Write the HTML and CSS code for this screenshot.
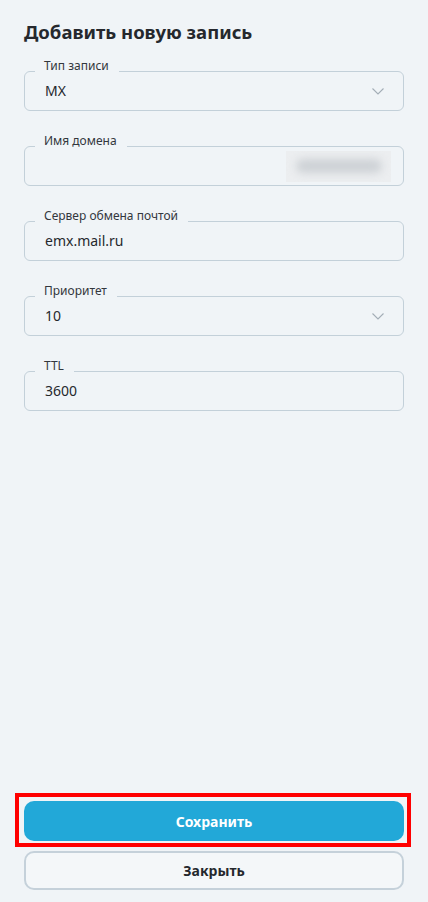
FILE: index.html
```html
<!DOCTYPE html>
<html lang="ru">
<head>
<meta charset="utf-8">
<title>Добавить новую запись</title>
<link rel="stylesheet" href="styles.css">
</head>
<body>
<div class="page">
  <h1 class="title">Добавить новую запись</h1>
  <form class="form">
    <div class="field">
      <span class="field-label">Тип записи</span>
      <span class="field-value">MX</span>
      <svg class="chevron" width="12" height="7" viewBox="0 0 12 7"><path d="M0.5 0.5 L6 6 L11.5 0.5" fill="none" stroke="#a3adb6" stroke-width="1.1"/></svg>
    </div>
    <div class="field">
      <span class="field-label">Имя домена</span>
      <span class="blurred"><span class="blob"></span></span>
    </div>
    <div class="field">
      <span class="field-label">Сервер обмена почтой</span>
      <span class="field-value">emx.mail.ru</span>
    </div>
    <div class="field">
      <span class="field-label">Приоритет</span>
      <span class="field-value">10</span>
      <svg class="chevron" width="12" height="7" viewBox="0 0 12 7"><path d="M0.5 0.5 L6 6 L11.5 0.5" fill="none" stroke="#a3adb6" stroke-width="1.1"/></svg>
    </div>
    <div class="field">
      <span class="field-label">TTL</span>
      <span class="field-value">3600</span>
    </div>
  </form>
  <div class="actions">
    <button type="button" class="btn btn-primary highlighted">Сохранить</button>
    <button type="button" class="btn btn-secondary">Закрыть</button>
  </div>
</div>
</body>
</html>
```
FILE: styles.css
```css
* { box-sizing: border-box; }
html, body { margin: 0; padding: 0; }
body {
  background: #f0f4f7;
  font-family: "Noto Sans", "Open Sans", sans-serif;
  color: #25282d;
}
.page {
  min-height: 902px;
  display: flex;
  flex-direction: column;
  padding: 20px 24px 12px;
}
.title {
  margin: 0;
  font-size: 18.5px;
  line-height: 24px;
  font-weight: 700;
  color: #25282d;
}
.form {
  margin-top: 27px;
  display: flex;
  flex-direction: column;
  gap: 35px;
}
.field {
  position: relative;
  height: 40px;
  border: 1px solid #c3d0d9;
  border-radius: 6px;
  display: flex;
  align-items: center;
  padding: 0 19px 0 20px;
}
.field-label {
  position: absolute;
  left: 10px;
  top: -13px;
  padding: 0 10px 0 9px;
  background: #f0f4f7;
  font-size: 12px;
  line-height: 14px;
  color: #33373d;
}
.field-value {
  font-size: 14px;
  line-height: 20px;
  color: #25282d;
}
.chevron {
  margin-left: auto;
  display: block;
}
.blurred {
  margin-left: auto;
  margin-right: -7px;
  width: 105px;
  height: 31px;
  background: #eceef0;
  display: flex;
  align-items: center;
  justify-content: center;
  overflow: hidden;
}
.blob {
  display: block;
  width: 86px;
  height: 14px;
  border-radius: 7px;
  background: #cdd1d5;
  filter: blur(4px);
}
.actions {
  margin-top: auto;
  display: flex;
  flex-direction: column;
  gap: 10px;
}
.btn {
  width: 100%;
  height: 40px;
  border-radius: 10px;
  font-family: "Noto Sans", "Open Sans", sans-serif;
  font-size: 14px;
  font-weight: 700;
  cursor: pointer;
}
.btn-primary {
  background: #22a8d8;
  color: #ffffff;
  border: none;
}
.btn-secondary {
  height: 39px;
  background: #f4f7f9;
  color: #25282d;
  border: 2px solid #c5d1da;
}
.highlighted {
  position: relative;
}
.highlighted::after {
  content: "";
  position: absolute;
  top: -8px;
  left: -9px;
  right: -7px;
  bottom: -6px;
  border: 4px solid #ff0000;
  pointer-events: none;
}
```
